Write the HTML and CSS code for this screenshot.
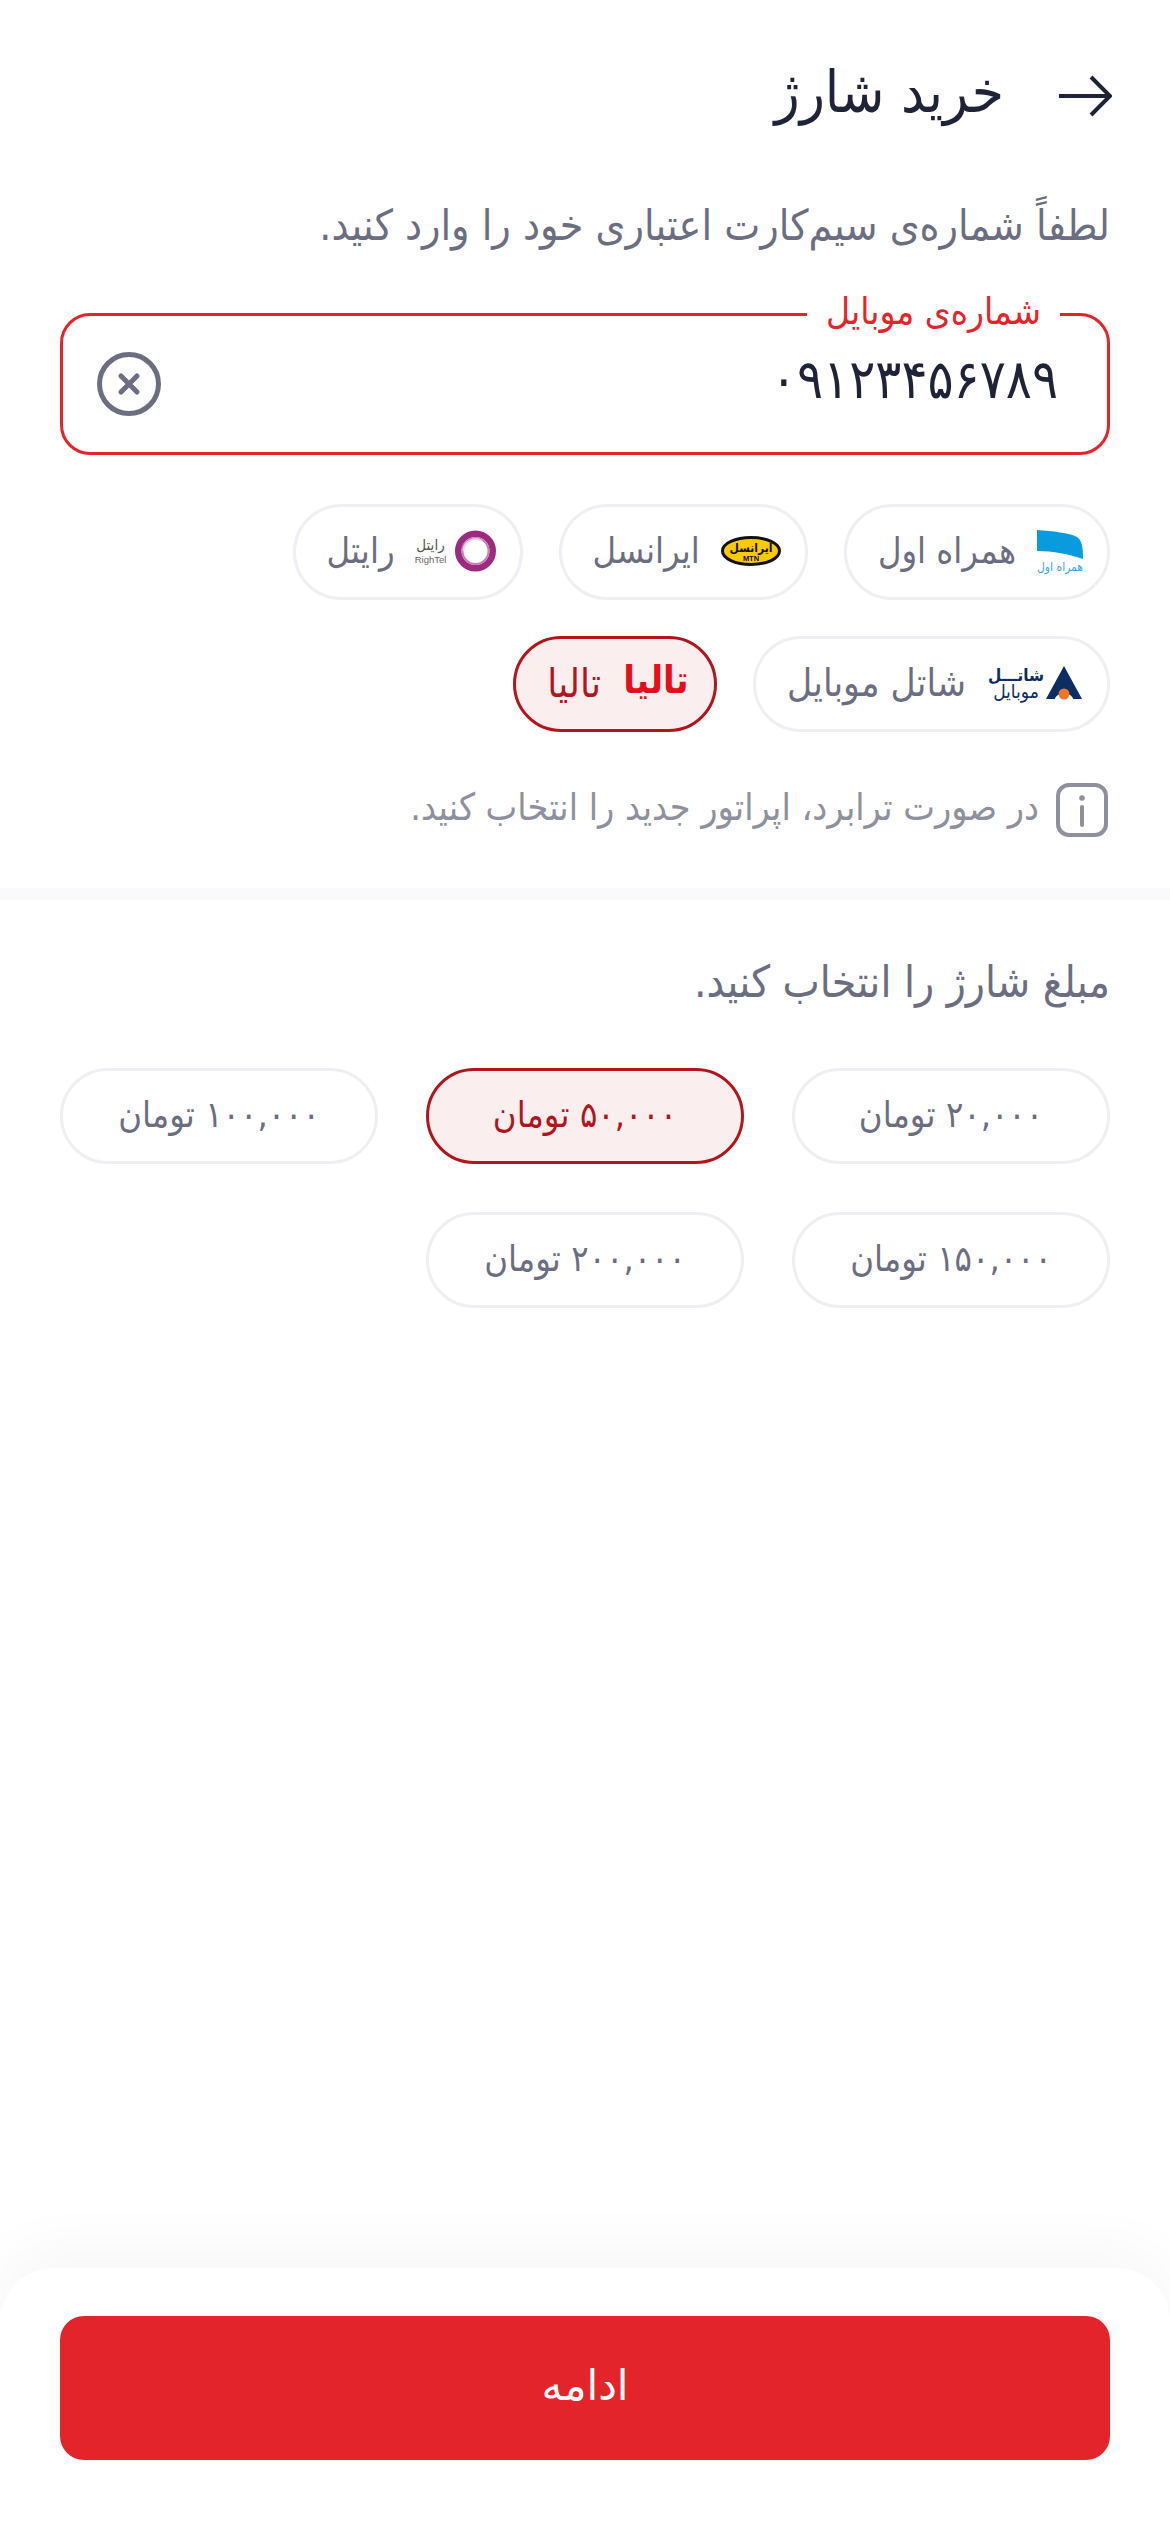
FILE: index.html
```html
<!DOCTYPE html>
<html lang="fa" dir="rtl">
<head>
<meta charset="utf-8">
<title>خرید شارژ</title>
<link rel="stylesheet" href="styles.css">
</head>
<body>
<div class="page">
  <section class="top">
    <header class="topbar">
      <svg class="back" viewBox="0 0 54 42" width="54" height="42"><path d="M1 21H52M33 2L52 21L33 40" fill="none" stroke="#1f2337" stroke-width="4"/></svg>
      <h1 class="title">خرید شارژ</h1>
    </header>
    <p class="prompt">لطفاً شماره‌ی سیم‌کارت اعتباری خود را وارد کنید.</p>
    <div class="field">
      <label class="field-label">شماره‌ی موبایل</label>
      <span class="number">۰۹۱۲۳۴۵۶۷۸۹</span>
      <svg class="clear" viewBox="0 0 64 64" width="64" height="64"><circle cx="32" cy="32" r="29.5" fill="none" stroke="#6b6e80" stroke-width="5"/><path d="M24 24L40 40M40 24L24 40" stroke="#6b6e80" stroke-width="5" stroke-linecap="round"/></svg>
    </div>
    <div class="chips">
      <div class="chip">
        <svg class="logo" viewBox="0 0 46 42" width="46" height="42"><path d="M0 0C16 1 32 3 40 7C44 10 46 14 46 29C32 24 16 21 0 21Z" fill="#0a9ade"/><text x="23" y="41" class="logo-t" fill="#38a6e6" font-size="12" text-anchor="middle">همراه اول</text></svg>
        <span>همراه اول</span>
      </div>
      <div class="chip">
        <svg class="logo" viewBox="0 0 60 30" width="60" height="30"><ellipse cx="30" cy="15" rx="28.5" ry="13.500" fill="#fcc80a" stroke="#111" stroke-width="3"/><text x="30" y="16" class="logo-t logo-b" fill="#111" font-size="12" text-anchor="middle">ایرانسل</text><text x="30" y="25" class="logo-m" fill="#111" font-size="7.500" text-anchor="middle">MTN</text></svg>
        <span>ایرانسل</span>
      </div>
      <div class="chip">
        <svg class="logo" viewBox="0 0 80 42" width="80" height="42"><circle cx="59.500" cy="21" r="17.250" fill="none" stroke="#9c2a7f" stroke-width="6.500"/><circle cx="59.500" cy="21" r="13" fill="none" stroke="#c97db5" stroke-width="2"/><path d="M47.500 21A12 12 0 0 1 66 11" fill="none" stroke="#ecd2e4" stroke-width="2"/><text x="14.500" y="20" class="logo-t" fill="#555" font-size="15" text-anchor="middle">رایتل</text><text x="14.500" y="33" class="logo-m logo-r" fill="#666" font-size="9.500" text-anchor="middle">RighTel</text></svg>
        <span>رایتل</span>
      </div>
      <div class="chip chip-wide">
        <svg class="logo" viewBox="0 0 96 36" width="96" height="36"><path d="M77 1L95 34H86C85 27 69 27 68 34H59Z" fill="#0e2e63"/><circle cx="77" cy="29" r="5.500" fill="#ee7624"/><text x="29" y="16" class="logo-t logo-b" fill="#0e2e63" font-size="17" text-anchor="middle">شاتـــل</text><text x="29" y="33" class="logo-t" fill="#0e2e63" font-size="19" text-anchor="middle">موبایل</text></svg>
        <span>شاتل موبایل</span>
      </div>
      <div class="chip chip-tall is-active">
        <svg class="logo" viewBox="0 0 68 36" width="68" height="36"><text x="34" y="28" class="logo-t logo-b" fill="#e30f1c" font-size="38" text-anchor="middle">تالیا</text></svg>
        <span>تالیا</span>
      </div>
    </div>
    <div class="info">
      <svg class="info-icon" viewBox="0 0 52 54" width="52" height="54"><rect x="2" y="2" width="48" height="50" rx="11" fill="none" stroke="#8e909e" stroke-width="4"/><path d="M26 24V42" stroke="#8e909e" stroke-width="4" stroke-linecap="round"/><circle cx="26" cy="15" r="2.800" fill="#8e909e"/></svg>
      <span class="info-text">در صورت ترابرد، اپراتور جدید را انتخاب کنید.</span>
    </div>
  </section>
  <div class="divider"></div>
  <section class="amounts">
    <h2 class="amounts-title">مبلغ شارژ را انتخاب کنید.</h2>
    <div class="amount-grid">
      <div class="amount">۲۰,۰۰۰ تومان</div>
      <div class="amount is-active">۵۰,۰۰۰ تومان</div>
      <div class="amount">۱۰۰,۰۰۰ تومان</div>
      <div class="amount">۱۵۰,۰۰۰ تومان</div>
      <div class="amount">۲۰۰,۰۰۰ تومان</div>
    </div>
  </section>
  <footer class="sheet">
    <button class="cta">ادامه</button>
  </footer>
</div>
</body>
</html>
```
FILE: styles.css
```css
* { box-sizing: border-box; }
html, body { margin: 0; padding: 0; background: #fff; }
body { font-family: "DejaVu Sans", sans-serif; font-stretch: condensed; color: #6b6e80; }
.page { height: 2531px; display: flex; flex-direction: column; overflow: hidden; }
.top { padding: 0 60px 50px; }
.topbar { height: 192px; display: flex; align-items: center; gap: 54px; margin-right: -2px; }
.back { flex: none; }
.title { margin: 0 0 8px; font-size: 58px; line-height: 70px; font-weight: 400; color: #1f2337; }
.prompt { margin: 1px 0 54px; font-size: 42.5px; line-height: 66px; font-weight: 400; }
.field { position: relative; height: 142px; border: 3px solid #e3242b; border-radius: 30px; display: flex; align-items: center; justify-content: space-between; padding: 0 49px 0 34px; }
.field-label { position: absolute; top: -30px; right: 47px; padding: 0 19px; background: #fff; color: #e3242b; font-size: 36.8px; line-height: 52px; }
.number { margin-bottom: 8px; font-size: 54px; line-height: 70px; color: #1f2337; }
.chips { margin-top: 49px; display: flex; flex-wrap: wrap; gap: 36px; }
.chip { height: 96px; display: flex; align-items: center; gap: 21px; padding: 0 24px 3px 31px; border: 3px solid #eeeef3; border-radius: 48px; font-size: 36px; color: #6b6e80; }
.chip-wide { font-size: 38.5px; }
.chip-tall { font-size: 40px; }
.logo { flex: none; overflow: visible; }
.logo-t { font-family: "DejaVu Sans", sans-serif; }
.logo-b { font-weight: 700; }
.logo-m { font-family: "Liberation Sans", sans-serif; font-weight: 700; }
.logo-r { font-weight: 400; }
.chip.is-active, .amount.is-active { border-color: #b3151c; background: #fbeeef; color: #b3151c; }
.info { margin-top: 50px; height: 56px; display: flex; align-items: center; gap: 17px; padding-right: 2px; font-size: 37.4px; color: #8e909e; }
.info-icon { flex: none; }
.info-text { margin-bottom: 6px; }
.divider { height: 12px; background: #fafafd; flex: none; }
.amounts { padding: 52px 60px 0; flex: 1; }
.amounts-title { margin: 0 0 56px; font-size: 44px; line-height: 60px; font-weight: 400; }
.amount-grid { display: grid; grid-template-columns: repeat(3, 1fr); gap: 48px; }
.amount { height: 96px; padding-bottom: 3px; display: flex; align-items: center; justify-content: center; border: 3px solid #eeeef3; border-radius: 48px; font-size: 36px; }
.sheet { flex: none; height: 263px; padding: 48px 60px 0; border-radius: 54px 54px 0 0; background: #fff; box-shadow: 0 -20px 60px rgba(0, 0, 0, .035); }
.cta { display: block; width: 100%; height: 144px; padding: 0 0 6px; border: 0; border-radius: 24px; background: #e3242b; color: #fff; font-family: inherit; font-size: 42px; font-weight: 400; }
```
